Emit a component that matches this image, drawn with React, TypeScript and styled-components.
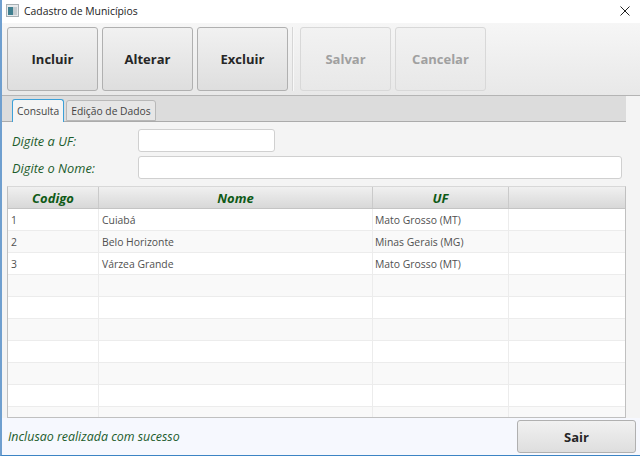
import React from "react";
import styled, { createGlobalStyle } from "styled-components";

const GlobalStyle = createGlobalStyle`
  html, body {
    margin: 0;
    padding: 0;
    background: #ffffff;
  }
  * {
    box-sizing: border-box;
  }
`;

const Window = styled.div`
  width: 640px;
  height: 456px;
  display: flex;
  flex-direction: column;
  overflow: hidden;
  background: #f4f4f4;
  border-left: 2px solid #6f9fcf;
  border-bottom: 1px solid #3c84c4;
  font-family: "Open Sans", "Noto Sans", sans-serif;
  font-size: 11px;
  color: #333;
`;

const TitleBar = styled.div`
  height: 23px;
  flex: none;
  display: flex;
  align-items: center;
  gap: 5px;
  padding: 0 10px 2px 4px;
  background: #fff;
  font-size: 10.4px;
  color: #222;
`;

const CloseButton = styled.span`
  margin-left: auto;
  display: flex;
`;

const ToolBar = styled.div`
  height: 73px;
  flex: none;
  display: flex;
  align-items: flex-start;
  gap: 4px;
  padding: 4px 5px 0;
  background: linear-gradient(#f6f6f6, #e8e8e8);
  border-bottom: 1px solid #b4b4b4;
`;

const ActionButton = styled.button<{ $off?: boolean }>`
  width: 91px;
  height: 64px;
  padding: 0;
  border: 1px solid ${(p) => (p.$off ? "#d8d8d8" : "#b0b0b0")};
  border-radius: 3px;
  background: ${(p) =>
    p.$off
      ? "linear-gradient(#f2f2f2, #e8e8e8)"
      : "linear-gradient(#f1f1f1, #dedede)"};
  font-family: inherit;
  font-size: 13px;
  font-weight: 700;
  color: ${(p) => (p.$off ? "#a0a0a0" : "#262626")};
`;

const ToolSeparator = styled.div`
  width: 2px;
  height: 64px;
  margin-right: 2px;
  background: #d6d6d6;
  border-right: 1px solid #f8f8f8;
`;

const TabStrip = styled.div`
  height: 26px;
  flex: none;
  width: 624px;
  display: flex;
  align-items: flex-end;
  gap: 2px;
  padding-left: 10px;
  background: #dcdcdc;
  border-bottom: 1px solid #ababab;
`;

const Tab = styled.div<{ $active?: boolean }>`
  height: ${(p) => (p.$active ? "23px" : "21px")};
  margin-bottom: ${(p) => (p.$active ? "-1px" : "0")};
  display: flex;
  align-items: center;
  padding: 0 4px;
  border: 1px solid ${(p) => (p.$active ? "#3ca0d8" : "#b8b8b8")};
  border-bottom: ${(p) => (p.$active ? "none" : "1px solid #b8b8b8")};
  border-radius: 3px 3px 0 0;
  background: ${(p) => (p.$active ? "#f4f4f4" : "#e6e6e6")};
  font-size: 10.3px;
  color: #444;
`;

const Form = styled.div`
  flex: none;
  display: flex;
  flex-direction: column;
  gap: 4px;
  padding: 7px 16px 7px 10px;
`;

const FormRow = styled.div`
  display: flex;
  align-items: center;
`;

const FieldLabel = styled.label`
  width: 126px;
  flex: none;
  font-style: italic;
  font-size: 12.8px;
  color: #1c5c2c;
`;

const TextInput = styled.input<{ $wide?: boolean }>`
  width: ${(p) => (p.$wide ? "484px" : "137px")};
  height: 23px;
  border: 1px solid #d0d0d0;
  border-radius: 3px;
  background: #fff;
  outline: none;
`;

const Table = styled.div`
  width: 619px;
  height: 232px;
  flex: none;
  margin-left: 5px;
  overflow: hidden;
  background: #fff;
  border: 1px solid #c0c0c0;
  border-top-color: #d8d8d8;
`;

const Columns = styled.div`
  display: grid;
  grid-template-columns: 91px 274px 136px 1fr;
`;

const HeaderRow = styled(Columns)`
  height: 22px;
  background: linear-gradient(#f0f0f0, #d8d8d8);
  border-bottom: 1px solid #c4c4c4;
`;

const HeaderCell = styled.div`
  display: flex;
  align-items: center;
  justify-content: center;
  border-right: 1px solid #cacaca;
  font-size: 13px;
  font-weight: 700;
  font-style: italic;
  color: #0f5a16;
  &:last-child {
    border-right: none;
  }
`;

const BodyRow = styled(Columns)<{ $odd: boolean }>`
  height: 22px;
  background: ${(p) => (p.$odd ? "#f9f9f9" : "#ffffff")};
  border-bottom: 1px solid #ececec;
`;

const BodyCell = styled.div`
  display: flex;
  align-items: center;
  padding-left: 3px;
  border-right: 1px solid #ececec;
  font-size: 10.4px;
  color: #505050;
  &:nth-child(3) {
    padding-left: 2px;
  }
  &:last-child {
    border-right: none;
  }
`;

const Footer = styled.div`
  flex: 1;
  display: flex;
  align-items: center;
  justify-content: space-between;
  padding: 2px 4px 2px 6px;
  background: #f6f8fe;
`;

const StatusText = styled.span`
  font-style: italic;
  font-size: 12.4px;
  color: #1c5c2c;
`;

const ExitButton = styled.button`
  width: 119px;
  height: 33px;
  padding: 0;
  border: 1px solid #b0b0b0;
  border-radius: 3px;
  background: linear-gradient(#f1f1f1, #dedede);
  font-family: inherit;
  font-size: 13px;
  font-weight: 700;
  color: #262626;
`;

const rows = [
  ["1", "Cuiabá", "Mato Grosso (MT)", ""],
  ["2", "Belo Horizonte", "Minas Gerais (MG)", ""],
  ["3", "Várzea Grande", "Mato Grosso (MT)", ""],
  ...Array.from({ length: 7 }, () => ["", "", "", ""]),
];

function AppIcon() {
  return (
    <svg width="13" height="13" viewBox="0 0 13 13">
      <rect x="0.5" y="0.5" width="12" height="12" fill="#e8eaec" stroke="#a8b0b4" />
      <rect x="2" y="3" width="5" height="8" fill="#3f7f8f" />
      <rect x="7" y="3" width="4" height="8" fill="#c4ccd0" />
    </svg>
  );
}

export default function App() {
  return (
    <>
      <GlobalStyle />
      <Window>
        <TitleBar>
          <AppIcon />
          Cadastro de Municípios
          <CloseButton>
            <svg width="10" height="10" viewBox="0 0 10 10">
              <path d="M0.5 0.5L9.5 9.5M9.5 0.5L0.5 9.5" stroke="#222" fill="none" />
            </svg>
          </CloseButton>
        </TitleBar>
        <ToolBar>
          <ActionButton>Incluir</ActionButton>
          <ActionButton>Alterar</ActionButton>
          <ActionButton>Excluir</ActionButton>
          <ToolSeparator />
          <ActionButton $off>Salvar</ActionButton>
          <ActionButton $off>Cancelar</ActionButton>
        </ToolBar>
        <TabStrip>
          <Tab $active>Consulta</Tab>
          <Tab>Edição de Dados</Tab>
        </TabStrip>
        <Form>
          <FormRow>
            <FieldLabel>Digite a UF:</FieldLabel>
            <TextInput />
          </FormRow>
          <FormRow>
            <FieldLabel>Digite o Nome:</FieldLabel>
            <TextInput $wide />
          </FormRow>
        </Form>
        <Table>
          <HeaderRow>
            <HeaderCell>Codigo</HeaderCell>
            <HeaderCell>Nome</HeaderCell>
            <HeaderCell>UF</HeaderCell>
            <HeaderCell />
          </HeaderRow>
          {rows.map((row, i) => (
            <BodyRow key={i} $odd={i % 2 === 1}>
              {row.map((cell, j) => (
                <BodyCell key={j}>{cell}</BodyCell>
              ))}
            </BodyRow>
          ))}
        </Table>
        <Footer>
          <StatusText>Inclusao realizada com sucesso</StatusText>
          <ExitButton>Sair</ExitButton>
        </Footer>
      </Window>
    </>
  );
}
